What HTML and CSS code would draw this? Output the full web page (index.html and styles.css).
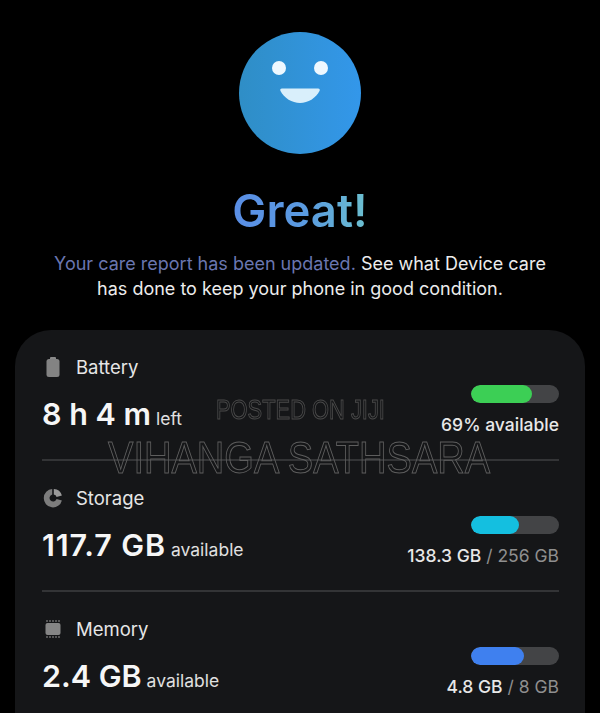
FILE: index.html
```html
<!DOCTYPE html>
<html>
  <head>
    <title>Device care</title>
    <link rel="stylesheet" href="styles.css">
  </head>
  <body>
    <div class="hero">
      <svg class="face" width="122" height="122" viewBox="0 0 122 122">
        <defs>
          <linearGradient id="face-fill" x1="0" y1="0" x2="1" y2="0">
            <stop offset="0" stop-color="#2f8ec6"/>
            <stop offset="1" stop-color="#3397ea"/>
          </linearGradient>
        </defs>
        <circle cx="61" cy="61" r="61" fill="url(#face-fill)"/>
        <circle cx="40" cy="36" r="7" fill="#eef8ff"/>
        <circle cx="82" cy="36" r="7" fill="#eef8ff"/>
        <path d="M43 56.5 H79 Q81.5 56.5 80.5 59 C77 66 69 71 61 71 C53 71 45 66 41.5 59 Q40.5 56.5 43 56.5 Z" fill="#d9effb"/>
      </svg>
      <h1>Great!</h1>
      <p class="intro"><span class="intro-accent">Your care report has been updated.</span> See what Device care<br>has done to keep your phone in good condition.</p>
    </div>

    <div class="card">
      <div class="row">
        <div class="row-main">
          <div class="row-label">
            <svg class="icon" width="16" height="20" viewBox="0 0 16 20">
              <rect x="5" y="0" width="6" height="3" rx="1" fill="#8a8a8a"/>
              <rect x="1.5" y="2" width="13" height="18" rx="2.5" fill="#838383"/>
            </svg>
            <span>Battery</span>
          </div>
          <div class="row-value"><b>8 h 4 m</b> left</div>
        </div>
        <div class="row-side">
          <div class="bar"><div class="bar-fill bar-green"></div></div>
          <div class="side-text"><b>69% available</b></div>
        </div>
      </div>

      <div class="row">
        <div class="row-main">
          <div class="row-label">
            <svg class="icon" width="20" height="20" viewBox="0 0 20 20">
              <path d="M10.8 1 A9 9 0 0 1 18.9 7.6 L13.6 9 A3.6 3.6 0 0 0 10.8 6.5 Z" fill="#9a9a9a"/>
              <path d="M9.2 1 V6.5 A3.6 3.6 0 1 0 13.6 11 L18.9 12.4 A9.2 9.2 0 1 1 9.2 1 Z" fill="#7d7d7d"/>
            </svg>
            <span>Storage</span>
          </div>
          <div class="row-value"><b class="spaced">117.7 GB</b> available</div>
        </div>
        <div class="row-side">
          <div class="bar"><div class="bar-fill bar-cyan"></div></div>
          <div class="side-text"><b>138.3 GB</b> <span class="dim">/ 256 GB</span></div>
        </div>
      </div>

      <div class="row">
        <div class="row-main">
          <div class="row-label">
            <svg class="icon" width="18" height="20" viewBox="0 0 18 20">
              <rect x="1.5" y="4" width="15" height="12" rx="2" fill="#858585"/>
              <path d="M3 1 V3 M6 1 V3 M9 1 V3 M12 1 V3 M15 1 V3 M3 17 V19 M6 17 V19 M9 17 V19 M12 17 V19 M15 17 V19" stroke="#6f6f6f" stroke-width="1.4"/>
            </svg>
            <span>Memory</span>
          </div>
          <div class="row-value"><b>2.4 GB</b> available</div>
        </div>
        <div class="row-side">
          <div class="bar"><div class="bar-fill bar-blue"></div></div>
          <div class="side-text"><b>4.8 GB</b> <span class="dim">/ 8 GB</span></div>
        </div>
      </div>

      <div class="mark mark-small">POSTED ON JIJI</div>
      <div class="mark mark-large">VIHANGA SATHSARA</div>
    </div>
  </body>
</html>
```

FILE: styles.css
```css
* {box-sizing: border-box;}

html {
  background-color: #000;
}

body {
  margin: 0;
  height: 713px;
  overflow: hidden;
  font-family: Inter, "Liberation Sans", sans-serif;
  color: #f2f2f2;
}

.hero {
  padding-top: 32px;
  text-align: center;
}

.face {
  display: block;
  margin: 0 auto;
}

h1 {
  margin: 27px 0 0 0;
  font-size: 45.5px;
  line-height: 60px;
  font-weight: 600;
  background: linear-gradient(90deg, #5a8ee6 0%, #5a9be0 55%, #6cc0cf 100%);
  background-clip: text;
  -webkit-background-clip: text;
  color: transparent;
  display: inline-block;
}

.intro {
  margin: 10px 0 0 0;
  font-size: 18px;
  line-height: 25px;
  color: #ececec;
}

.intro-accent {
  color: #6a76b0;
}

.card {
  position: relative;
  margin: 29px 15px 0 15px;
  padding: 0 26px 0 27px;
  height: 383px;
  background-color: #151618;
  border-radius: 36px 36px 0 0;
}

.row {
  display: flex;
  justify-content: space-between;
  height: 131px;
  padding-top: 24px;
  border-bottom: 2px solid #333436;
}

.row:last-of-type {
  height: 121px;
  border-bottom: 0;
}

.row-label {
  display: flex;
  align-items: center;
  gap: 13px;
  height: 26px;
  font-size: 18.5px;
  color: #e6e6e6;
}

.icon {
  display: block;
  flex: none;
  margin-left: 1px;
  width: 20px;
}

.row-value {
  margin-top: 17px;
  font-size: 17.5px;
  line-height: 34px;
  color: #e0e0e0;
}

.row-value b {
  font-size: 30.5px;
  font-weight: 600;
  color: #f6f6f6;
}

.row-value .spaced {
  letter-spacing: 0.9px;
}

.row-side {
  display: flex;
  flex-direction: column;
  align-items: flex-end;
  padding-top: 31px;
}

.bar {
  width: 88px;
  height: 18px;
  border-radius: 9px;
  overflow: hidden;
  background-color: #434446;
}

.bar-fill {
  height: 100%;
  border-radius: 9px;
}

.bar-green {
  width: 61px;
  background-color: #3ccf55;
}

.bar-cyan {
  width: 48px;
  background-color: #14bfe0;
}

.bar-blue {
  width: 53px;
  background-color: #3f80ef;
}

.side-text {
  margin-top: 11px;
  font-size: 17.5px;
  line-height: 22px;
  color: #8f8f8f;
}

.side-text b {
  font-weight: 500;
  color: #e8e8e8;
}

.dim {
  color: #8f8f8f;
}

.mark {
  position: absolute;
  font-family: "Liberation Sans", sans-serif;
  color: transparent;
  -webkit-text-stroke: 1px #5e5e5e;
  white-space: nowrap;
  transform-origin: left center;
}

.mark-small {
  left: 201px;
  top: 66px;
  font-size: 27px;
  line-height: 28px;
  transform: scaleX(0.81);
  -webkit-text-stroke-color: #4a4a4a;
}

.mark-large {
  left: 93px;
  top: 106px;
  font-size: 45px;
  line-height: 44px;
  transform: scaleX(0.846);
}
```
